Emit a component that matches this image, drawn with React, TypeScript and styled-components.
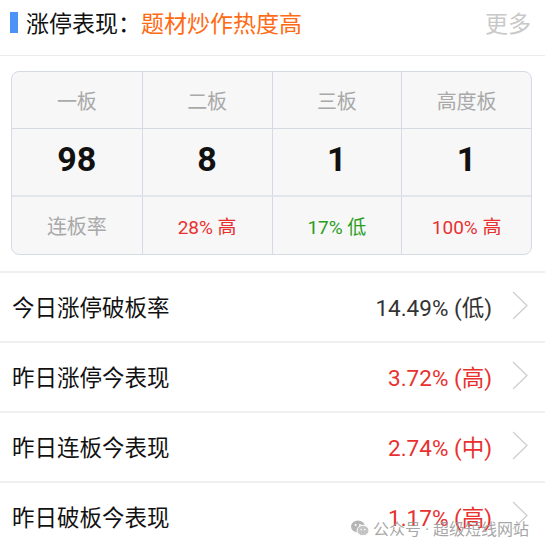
import React from "react";
import styled, { createGlobalStyle } from "styled-components";

const GlobalStyle = createGlobalStyle`
  html, body {
    margin: 0;
    padding: 0;
    background: #ffffff;
  }
  body {
    font-family: Roboto, "Noto Sans CJK SC", sans-serif;
    -webkit-font-smoothing: antialiased;
  }
`;

type Tone = "red" | "green" | "gray" | "dark";

const toneColor: Record<Tone, string> = {
  red: "#e8312f",
  green: "#2b9d1c",
  gray: "#a9a9a9",
  dark: "#333333",
};

const stats = [
  { name: "一板", count: 98, rate: "连板率", tone: "gray" as Tone },
  { name: "二板", count: 8, rate: "28% 高", tone: "red" as Tone },
  { name: "三板", count: 1, rate: "17% 低", tone: "green" as Tone },
  { name: "高度板", count: 1, rate: "100% 高", tone: "red" as Tone },
];

const rows = [
  { label: "今日涨停破板率", value: "14.49% (低)", tone: "dark" as Tone },
  { label: "昨日涨停今表现", value: "3.72% (高)", tone: "red" as Tone },
  { label: "昨日连板今表现", value: "2.74% (中)", tone: "red" as Tone },
  { label: "昨日破板今表现", value: "1.17% (高)", tone: "red" as Tone },
];

export default function App() {
  return (
    <>
      <GlobalStyle />
      <Page>
        <Header>
          <Marker />
          <Title>涨停表现：</Title>
          <Theme>题材炒作热度高</Theme>
          <More>更多</More>
        </Header>

        <Card>
          {stats.map((s) => (
            <HeadCell key={s.name}>{s.name}</HeadCell>
          ))}
          {stats.map((s) => (
            <CountCell key={s.name}>{s.count}</CountCell>
          ))}
          {stats.map((s) => (
            <RateCell key={s.name} $tone={s.tone} $label={s.tone === "gray"}>
              {s.rate}
            </RateCell>
          ))}
        </Card>

        <List>
          {rows.map((r) => (
            <Row key={r.label}>
              <Label>{r.label}</Label>
              <Value $tone={r.tone}>{r.value}</Value>
              <Chevron viewBox="0 0 16 29">
                <polyline points="1,1 15,14.5 1,28" />
              </Chevron>
            </Row>
          ))}
        </List>

        <Watermark>
          <svg width="18" height="17" viewBox="0 0 18 17">
            <ellipse cx="7" cy="6.5" rx="7" ry="6" fill="#b5b5b5" />
            <ellipse cx="12" cy="10.5" rx="6" ry="5.2" fill="#c4c4c4" stroke="#fff" strokeWidth="1" />
            <circle cx="4.6" cy="5" r="1" fill="#fff" />
            <circle cx="9" cy="5" r="1" fill="#fff" />
            <circle cx="10.2" cy="9.6" r="0.8" fill="#fff" />
            <circle cx="13.8" cy="9.6" r="0.8" fill="#fff" />
          </svg>
          <span>公众号 · 超级短线网站</span>
        </Watermark>
      </Page>
    </>
  );
}

const Page = styled.div`
  position: relative;
  width: 545px;
  height: 549px;
  overflow: hidden;
  background: #fff;
`;

const Header = styled.div`
  display: flex;
  align-items: center;
  height: 44px;
  padding: 0 14px 11px 10px;
  border-bottom: 1px solid #ebebeb;
  font-size: 23px;
`;

const Marker = styled.span`
  width: 8px;
  height: 21px;
  background: #4b93f6;
  margin-right: 8px;
`;

const Title = styled.span`
  color: #111;
`;

const Theme = styled.span`
  color: #ff6a12;
  margin-left: 0;
`;

const More = styled.span`
  margin-left: auto;
  color: #c9c9c9;
`;

const Card = styled.div`
  display: grid;
  grid-template-columns: repeat(4, 1fr);
  grid-template-rows: 57px 68px 57px;
  margin: 15px 13px 0 11px;
  border: 1px solid #d6dae5;
  border-radius: 8px;
  background: #f7f7f8;
  overflow: hidden;
`;

const Cell = styled.div`
  display: flex;
  align-items: center;
  justify-content: center;
  border-left: 1px solid #d6dae5;
  &:nth-child(4n + 1) {
    border-left: none;
  }
`;

const HeadCell = styled(Cell)`
  font-size: 20px;
  color: #a9a9a9;
  border-bottom: 1px solid #d6dae5;
`;

const CountCell = styled(Cell)`
  font-size: 34px;
  font-weight: 700;
  color: #111;
  padding-bottom: 6px;
  border-bottom: 2px solid #e3e5ec;
`;

const RateCell = styled(Cell)<{ $tone: Tone; $label: boolean }>`
  font-size: ${(p) => (p.$label ? "20px" : "19px")};
  color: ${(p) => toneColor[p.$tone]};
`;

const List = styled.div`
  margin-top: 16px;
`;

const Row = styled.div`
  display: flex;
  align-items: center;
  height: 65px;
  padding: 0 17px 3px 12px;
  border-top: 2px solid #efefef;
`;

const Label = styled.span`
  font-size: 22.5px;
  color: #111;
`;

const Value = styled.span<{ $tone: Tone }>`
  margin-left: auto;
  font-size: 22.5px;
  color: ${(p) => toneColor[p.$tone]};
`;

const Chevron = styled.svg`
  width: 16px;
  height: 29px;
  margin-left: 20px;
  fill: none;
  stroke: #cfcfcf;
  stroke-width: 1.3;
`;

const Watermark = styled.div`
  position: absolute;
  left: 351px;
  top: 516px;
  display: flex;
  align-items: center;
  gap: 4px;
  font-size: 16px;
  color: rgba(150, 150, 150, 0.85);
`;
